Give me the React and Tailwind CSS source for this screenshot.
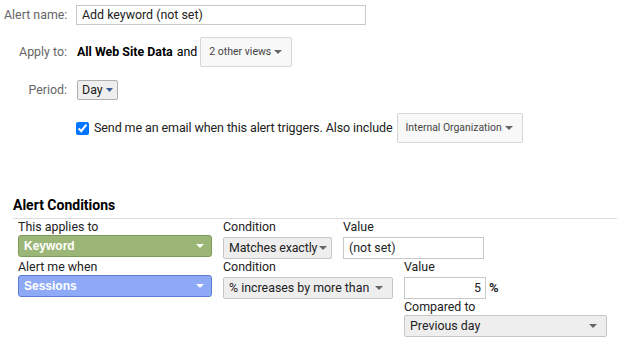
import React from 'react';

function Caret({ white }) {
    return (
        <svg width="8" height="4" viewBox="0 0 8 4" className="shrink-0">
            <path d="M0 0 L8 0 L4 4 Z" fill={white ? '#ffffff' : '#666666'} />
        </svg>
    );
}

function Label({ children }) {
    return <div className="w-[63px] text-right text-[#666] shrink-0 whitespace-nowrap">{children}</div>;
}

const arial = { fontFamily: 'Arial, "Liberation Sans", sans-serif' };

export default function App() {
    return (
        <div className="w-[617px] h-[346px] bg-white text-[12.4px] text-[#222] overflow-hidden whitespace-nowrap" style={{ fontFamily: 'Roboto, Arial, sans-serif' }}>
            {/* alert settings */}
            <div className="pl-[4px] pt-[5px]">
                <div className="flex items-center gap-[9px] h-[20px]">
                    <Label>Alert name:</Label>
                    <div className="w-[290px] h-[20px] border border-[#c8c8c8] px-[5px] flex items-center text-[#222]">Add keyword (not set)</div>
                </div>

                <div className="flex items-center gap-[10px] mt-[12px] h-[30px]">
                    <Label>Apply to:</Label>
                    <div className="flex items-center">
                        <span className="font-bold text-black">All Web Site Data</span>
                        <span className="ml-[4px] text-black">and</span>
                        <div className="ml-[3px] w-[92px] h-[30px] border border-[#d6d6d6] rounded-[2px] bg-[#f8f8f8] flex items-center justify-between pl-[8px] pr-[9px] text-[10.5px] text-[#444]">
                            2 other views
                            <Caret />
                        </div>
                    </div>
                </div>

                <div className="flex items-center gap-[10px] mt-[13px] h-[20px]">
                    <Label>Period:</Label>
                    <div className="h-[20px] px-[4px] border border-[#b0b0b0] rounded-[2px] bg-[#eeeeee] flex items-center gap-[3px] text-[#222]">
                        Day
                        <svg width="7" height="4" viewBox="0 0 7 4"><path d="M0 0 L7 0 L3.5 4 Z" fill="#3a5a94" /></svg>
                    </div>
                </div>

                <div className="flex items-center mt-[13px] h-[30px] pl-[72px]">
                    <input type="checkbox" defaultChecked className="w-[13px] h-[13px] m-0" />
                    <span className="ml-[5px] text-[#222] text-[12.5px] tracking-[-0.1px]">Send me an email when this alert triggers. Also include</span>
                    <div className="ml-[5px] w-[126px] h-[30px] border border-[#d6d6d6] rounded-[2px] bg-[#f8f8f8] flex items-center justify-between pl-[7px] pr-[9px] text-[10.4px] text-[#444]">
                        Internal Organization
                        <Caret />
                    </div>
                </div>
            </div>

            {/* conditions */}
            <div className="mt-[54px] pl-[13px]">
                <div className="font-bold text-[14px] text-black leading-[17px]">Alert Conditions</div>
                <div className="h-[1px] bg-[#dcdcdc] mt-[4px]"></div>

                <div className="pl-[5px]">
                    <div className="flex">
                        <div className="w-[194px]">
                            <div className="leading-[15px] text-[#222]">This applies to</div>
                            <div className="mt-[1px] h-[22px] rounded-[3px] bg-[#9cb677] border border-[#7c9a58] flex items-center justify-between pl-[5px] pr-[7px] text-white font-bold text-[12px]" style={arial}>
                                Keyword
                                <Caret white />
                            </div>
                        </div>
                        <div className="ml-[11px]">
                            <div className="leading-[15px]">Condition</div>
                            <div className="mt-[3px] w-[109px] h-[22px] pl-[5px] pr-[4px] border border-[#c6c6c6] rounded-[2px] bg-[#eeeeee] flex items-center justify-between tracking-[-0.1px]">
                                Matches exactly
                                <Caret />
                            </div>
                        </div>
                        <div className="ml-[11px]">
                            <div className="leading-[15px]">Value</div>
                            <div className="mt-[3px] w-[141px] h-[22px] border border-[#c8c8c8] px-[5px] flex items-center">(not set)</div>
                        </div>
                    </div>

                    <div className="flex mt-[0px]">
                        <div className="w-[194px]">
                            <div className="leading-[15px] text-[#222]">Alert me when</div>
                            <div className="mt-[1px] h-[22px] rounded-[3px] bg-[#8eaaf7] border border-[#5f7bd0] flex items-center justify-between pl-[5px] pr-[7px] text-white font-bold text-[12px]" style={arial}>
                                Sessions
                                <Caret white />
                            </div>
                        </div>
                        <div className="ml-[11px]">
                            <div className="leading-[15px]">Condition</div>
                            <div className="mt-[3px] w-[170px] h-[22px] pl-[5px] pr-[9px] border border-[#c6c6c6] rounded-[2px] bg-[#eeeeee] flex items-center justify-between">
                                % increases by more than
                                <Caret />
                            </div>
                        </div>
                        <div className="ml-[11px]">
                            <div className="leading-[15px]">Value</div>
                            <div className="mt-[3px] flex items-center">
                                <div className="w-[82px] h-[22px] border border-[#c8c8c8] px-[4px] flex items-center justify-end">5</div>
                                <span className="ml-[3px] font-bold text-[13px]">%</span>
                            </div>
                            <div className="leading-[15px] mt-[0px]">Compared to</div>
                            <div className="mt-[1px] w-[203px] h-[22px] pl-[5px] pr-[9px] border border-[#c6c6c6] rounded-[2px] bg-[#eeeeee] flex items-center justify-between">
                                Previous day
                                <Caret />
                            </div>
                        </div>
                    </div>
                </div>
            </div>
        </div>
    );
}
